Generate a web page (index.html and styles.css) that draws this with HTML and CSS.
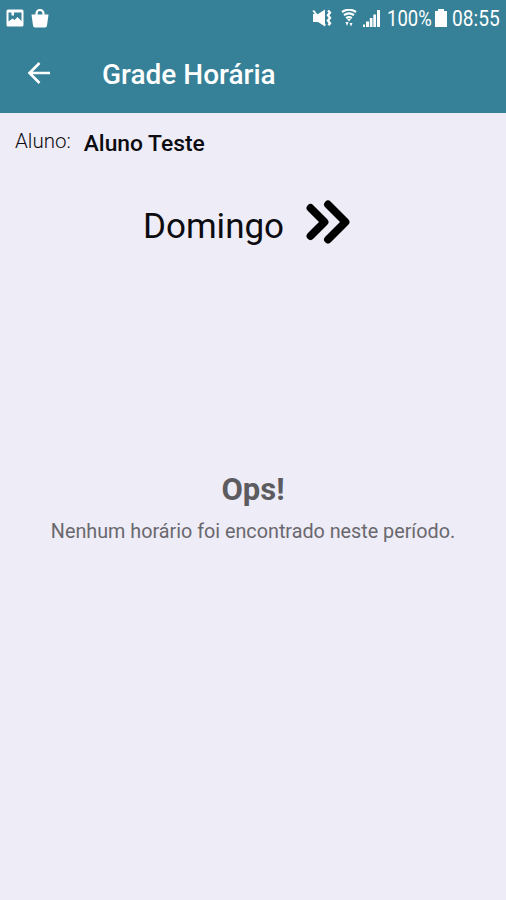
FILE: index.html
```html
<!DOCTYPE html>
<html lang="pt-BR">
<head>
<meta charset="utf-8">
<title>Grade Horária</title>
<link rel="stylesheet" href="styles.css">
</head>
<body>
<header class="top">
  <div class="status">
    <svg class="icon-photo" width="18" height="18" viewBox="0 0 18 18"><path fill-rule="evenodd" d="M2 0.500h14q1.500 0 1.500 1.500v14q0 1.500-1.500 1.500H2q-1.500 0-1.500-1.500V2q0-1.500 1.500-1.500zM2.500 3.500v9l4-3 2 1.500 3-3 4 4V3.500H8v3H5.500v-3z" fill="#fff"/></svg>
    <svg class="icon-bag" width="18" height="19" viewBox="0 0 18 19"><path d="M.5 5.500h17L16 16.500q-.3 2-2 2H4q-1.700 0-2-2z" fill="#fff"/><path d="M5.500 7V4.500a3.500 3.500 0 0 1 7 0V7" fill="none" stroke="#fff" stroke-width="2.200"/></svg>
    <svg class="icon-mute" width="20" height="18" viewBox="0 0 20 18"><path d="M1 5h5l7-4.500v17L6 13H1z" fill="#fff"/><path d="M2.500 1l3 4" stroke="#368197" stroke-width="1"/><path d="M1.200 1.500l12 15" stroke="#fff" stroke-width="2"/><path d="M16 1.500l2 2-2 2.700 2 2.700-2 2.700 2 2.700-1.500 2" fill="none" stroke="#fff" stroke-width="2.400"/></svg>
    <svg class="icon-wifi" width="16" height="18" viewBox="0 0 16 18"><g fill="none" stroke="#fff" stroke-width="2.200"><path d="M1 3q7-4.500 14 0M3 6.200q5-3.500 10 0M5.200 9.200q2.800-2 5.600 0"/></g><path d="M6 10h4l-2 2.500zM4.500 13h3L6 17zM8.500 14h3L10 17.500z" fill="#fff"/></svg>
    <svg class="icon-signal" width="19" height="18" viewBox="0 0 19 18"><path d="M1 15.500h2V18H1zM4 12.500h3V18H4zM7.800 9h2.700v9H7.800zM11.300 5.500H14V18h-2.700zM15 1h3v17h-3z" fill="#fff"/></svg>
    <span class="percent">100%</span>
    <svg class="icon-battery" width="12" height="18" viewBox="0 0 12 18"><path d="M3 0h6v2h3v16H0V2h3z" fill="#fff"/></svg>
    <span class="clock">08:55</span>
  </div>
  <div class="bar">
    <svg class="back" width="24" height="24" viewBox="0 0 24 24"><path d="M23 12H3M12.500 2L2.500 12l10 10" fill="none" stroke="#fff" stroke-width="2.600"/></svg>
    <h1 class="title">Grade Horária</h1>
  </div>
</header>
<main>
  <div class="student"><span class="label">Aluno:</span><span class="name">Aluno Teste</span></div>
  <div class="day"><span class="day-name">Domingo</span>
    <svg class="next" width="46" height="44" viewBox="0 0 46 44"><path d="M5.500 8l14 14-14 14M23 4.500L40.500 22 23 39.500" fill="none" stroke="#000" stroke-width="7.800" stroke-linecap="round" stroke-linejoin="round"/></svg>
  </div>
  <section class="empty"><h2 class="ops">Ops!</h2><p class="message">Nenhum horário foi encontrado neste período.</p></section>
</main>
</body>
</html>
```
FILE: styles.css
```css
body{margin:0;height:900px;background:#eeecf6;font-family:Roboto,sans-serif;color:#0c0b10;overflow:hidden}
h1,h2,p{margin:0}
svg{display:block;flex:none}
.top{height:113px;background:#368197;color:#fff}
.status{height:36px;display:flex;align-items:center;padding:0 6px 0 6px;font-size:21.500px}
.icon-bag{margin-left:7px}
.icon-mute{margin-left:auto}
.icon-wifi{margin-left:9px}
.icon-signal{margin-left:5px}
.percent{width:45px;margin-left:6px;transform:scaleX(.86);transform-origin:left}
.icon-battery{margin-left:3px}
.clock{width:48px;margin-left:5px;transform:scaleX(.89);transform-origin:left}
.bar{height:73px;display:flex;align-items:center;padding-left:27px}
.title{font-size:28px;font-weight:500;margin-left:51px;padding-top:4px}
.student{height:60px;display:flex;align-items:center;padding-left:15px}
.label{font-size:20.500px;font-weight:300;padding-bottom:4px}
.name{font-size:22.800px;font-weight:500;margin-left:13px}
.day{height:98px;display:flex;align-items:center;padding-left:143px}
.day-name{width:142px;font-size:35px;font-weight:400;padding-top:9px}
.next{margin-left:20px}
.empty{margin-top:199px;text-align:center;color:#5c5b60}
.ops{font-size:31px;font-weight:700;line-height:40px}
.message{font-size:19.750px;font-weight:400;line-height:24px;margin-top:10px;color:#69686e}
```
